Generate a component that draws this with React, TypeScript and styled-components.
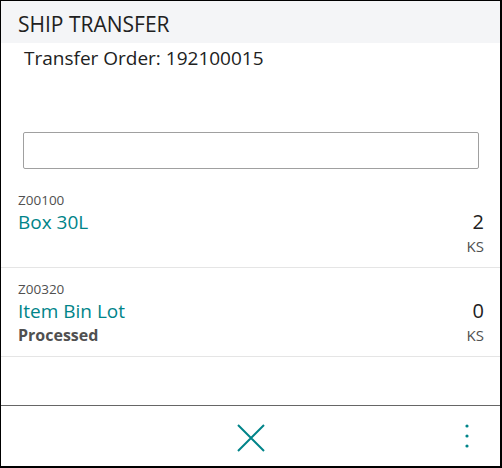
import React from 'react';
import styled, { createGlobalStyle } from 'styled-components';

const GlobalStyle = createGlobalStyle`
  html, body {
    margin: 0;
    padding: 0;
    background: #ffffff;
  }
  body {
    font-family: "Open Sans", "Noto Sans", sans-serif;
    color: #212121;
  }
`

const Frame = styled.div`
  width: 502px;
  height: 468px;
  box-sizing: border-box;
  border-style: solid;
  border-color: #000;
  border-width: 1px 2px 2px 1px;
  display: flex;
  flex-direction: column;
  background: #fff;
`

const Header = styled.header`
  height: 42px;
  flex-shrink: 0;
  background: #f4f5f7;
  display: flex;
  align-items: center;
  padding: 3px 0 0 17px;
  box-sizing: border-box;
  font-size: 21px;
  color: #212121;
`

const SubTitle = styled.div`
  padding: 3px 0 0 23px;
  font-size: 19px;
  line-height: 24px;
  height: 89px;
  box-sizing: border-box;
  flex-shrink: 0;
`

const SearchBox = styled.input`
  margin: 0 21px 10px 22px;
  height: 37px;
  flex-shrink: 0;
  box-sizing: border-box;
  border: 1px solid #a0a0a0;
  border-radius: 2px;
  outline: none;
  font: inherit;
  padding: 0 8px;
`

const List = styled.div`
  flex: 1;
  display: flex;
  flex-direction: column;
`

const Row = styled.div`
  display: grid;
  grid-template-columns: 1fr auto;
  grid-template-rows: 18px 26px 22px;
  padding: 12px 16px 10px 17px;
  border-bottom: 1px solid #e5e5e5;
`

const Code = styled.div`
  grid-column: 1 / 3;
  font-size: 13.5px;
  line-height: 18px;
  color: #505050;
`

const Name = styled.div`
  font-size: 19px;
  line-height: 26px;
  color: #008489;
`

const Qty = styled.div`
  font-size: 20px;
  line-height: 26px;
  text-align: right;
  color: #212121;
`

const Status = styled.div`
  font-size: 16px;
  line-height: 22px;
  font-weight: 700;
  color: #505050;
`

const Unit = styled.div`
  font-size: 15px;
  line-height: 22px;
  text-align: right;
  color: #505050;
`

const Footer = styled.footer`
  height: 56px;
  flex-shrink: 0;
  border-top: 1px solid #666;
  position: relative;
  display: flex;
  align-items: center;
  justify-content: center;
  padding-top: 4px;
  box-sizing: content-box;
`

const IconButton = styled.button`
  background: none;
  border: none;
  padding: 0;
  display: flex;
  cursor: pointer;
`

const MoreButton = styled(IconButton)`
  position: absolute;
  right: 30px;
  top: 50%;
  transform: translateY(-50%);
`

type Item = {
  code: string
  name: string
  qty: number
  unit: string
  status?: string
}

const items: Item[] = [
  { code: 'Z00100', name: 'Box 30L', qty: 2, unit: 'KS' },
  { code: 'Z00320', name: 'Item Bin Lot', qty: 0, unit: 'KS', status: 'Processed' },
];

export default function App() {
  return (
    <>
      <GlobalStyle />
      <Frame>
        <Header>SHIP TRANSFER</Header>
        <SubTitle>Transfer Order: 192100015</SubTitle>
        <SearchBox />
        <List>
          {items.map((item) => (
            <Row key={item.code}>
              <Code>{item.code}</Code>
              <Name>{item.name}</Name>
              <Qty>{item.qty}</Qty>
              <Status>{item.status}</Status>
              <Unit>{item.unit}</Unit>
            </Row>
          ))}
        </List>
        <Footer>
          <IconButton aria-label="Close">
            <svg width="28" height="28" viewBox="0 0 28 28">
              <path d="M1 1 L27 27 M27 1 L1 27" stroke="#008489" strokeWidth="2" fill="none" />
            </svg>
          </IconButton>
          <MoreButton aria-label="More">
            <svg width="6" height="24" viewBox="0 0 6 24">
              <circle cx="3" cy="2" r="1.6" fill="#008489" />
              <circle cx="3" cy="12" r="1.6" fill="#008489" />
              <circle cx="3" cy="22" r="1.6" fill="#008489" />
            </svg>
          </MoreButton>
        </Footer>
      </Frame>
    </>
  );
}
